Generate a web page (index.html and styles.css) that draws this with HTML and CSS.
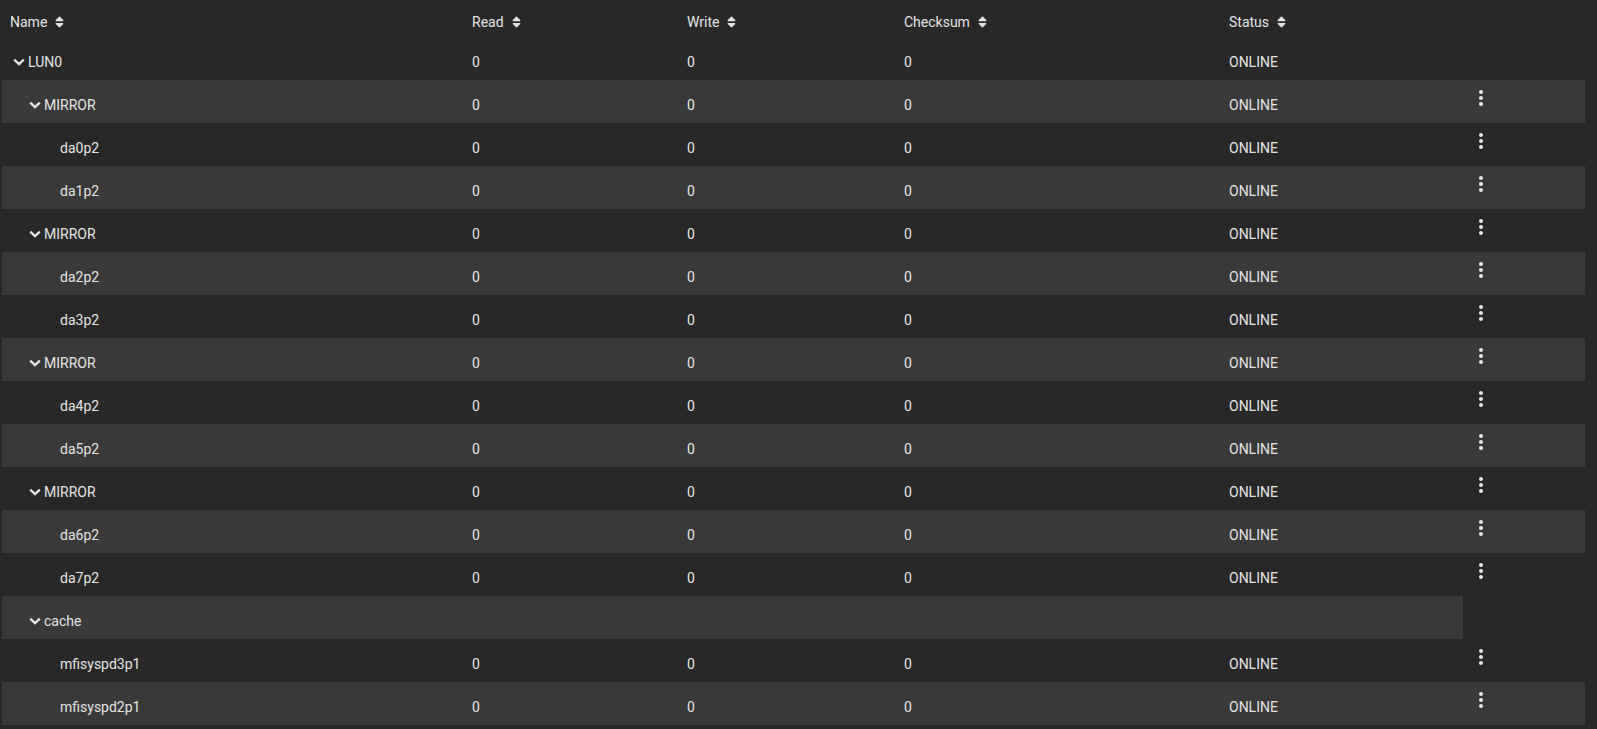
FILE: index.html
```html
<!DOCTYPE html>
<html lang="en">
<head>
<meta charset="utf-8">
<title>Pool topology</title>
<link rel="stylesheet" href="styles.css">
</head>
<body>
<svg width="0" height="0" class="defs">
  <defs>
    <symbol id="sort" viewBox="0 0 320 512"><path d="M41 288h238c21.4 0 32.1 25.9 17 41L177 448c-9.4 9.4-24.6 9.4-33.9 0L24 329c-15.1-15.1-4.4-41 17-41zm255-105L177 64c-9.4-9.4-24.6-9.4-33.9 0L24 183c-15.1 15.1-4.4 41 17 41h238c21.4 0 32.1-25.9 17-41z"/></symbol>
    <symbol id="chev" viewBox="0 0 20 20"><polyline points="5.2,7.6 10,12.2 14.8,7.6" fill="none" stroke="currentColor" stroke-width="2.3" stroke-linecap="butt" stroke-linejoin="miter"/></symbol>
    <symbol id="more" viewBox="0 0 24 24"><path d="M12 8c1.1 0 2-.9 2-2s-.9-2-2-2-2 .9-2 2 .9 2 2 2zm0 2c-1.1 0-2 .9-2 2s.9 2 2 2 2-.9 2-2-.9-2-2-2zm0 6c-1.1 0-2 .9-2 2s.9 2 2 2 2-.9 2-2-.9-2-2-2z"/></symbol>
  </defs>
</svg>
<div class="table">
  <div class="row head">
    <div class="cell"><span>Name</span><svg class="sort"><use href="#sort"/></svg></div>
    <div class="cell"><span>Read</span><svg class="sort"><use href="#sort"/></svg></div>
    <div class="cell"><span>Write</span><svg class="sort"><use href="#sort"/></svg></div>
    <div class="cell"><span>Checksum</span><svg class="sort"><use href="#sort"/></svg></div>
    <div class="cell"><span>Status</span><svg class="sort"><use href="#sort"/></svg></div>
    <div class="cell"></div>
  </div>

  <div class="row">
    <div class="cell name lvl0"><svg class="chev"><use href="#chev"/></svg><span>LUN0</span></div>
    <div class="cell">0</div><div class="cell">0</div><div class="cell">0</div><div class="cell">ONLINE</div><div class="cell"></div>
  </div>

  <div class="row odd">
    <div class="cell name lvl1"><svg class="chev"><use href="#chev"/></svg><span>MIRROR</span></div>
    <div class="cell">0</div><div class="cell">0</div><div class="cell">0</div><div class="cell">ONLINE</div>
    <div class="cell act"><svg class="more"><use href="#more"/></svg></div>
  </div>
  <div class="row">
    <div class="cell name lvl2"><span>da0p2</span></div>
    <div class="cell">0</div><div class="cell">0</div><div class="cell">0</div><div class="cell">ONLINE</div>
    <div class="cell act"><svg class="more"><use href="#more"/></svg></div>
  </div>
  <div class="row odd">
    <div class="cell name lvl2"><span>da1p2</span></div>
    <div class="cell">0</div><div class="cell">0</div><div class="cell">0</div><div class="cell">ONLINE</div>
    <div class="cell act"><svg class="more"><use href="#more"/></svg></div>
  </div>

  <div class="row">
    <div class="cell name lvl1"><svg class="chev"><use href="#chev"/></svg><span>MIRROR</span></div>
    <div class="cell">0</div><div class="cell">0</div><div class="cell">0</div><div class="cell">ONLINE</div>
    <div class="cell act"><svg class="more"><use href="#more"/></svg></div>
  </div>
  <div class="row odd">
    <div class="cell name lvl2"><span>da2p2</span></div>
    <div class="cell">0</div><div class="cell">0</div><div class="cell">0</div><div class="cell">ONLINE</div>
    <div class="cell act"><svg class="more"><use href="#more"/></svg></div>
  </div>
  <div class="row">
    <div class="cell name lvl2"><span>da3p2</span></div>
    <div class="cell">0</div><div class="cell">0</div><div class="cell">0</div><div class="cell">ONLINE</div>
    <div class="cell act"><svg class="more"><use href="#more"/></svg></div>
  </div>

  <div class="row odd">
    <div class="cell name lvl1"><svg class="chev"><use href="#chev"/></svg><span>MIRROR</span></div>
    <div class="cell">0</div><div class="cell">0</div><div class="cell">0</div><div class="cell">ONLINE</div>
    <div class="cell act"><svg class="more"><use href="#more"/></svg></div>
  </div>
  <div class="row">
    <div class="cell name lvl2"><span>da4p2</span></div>
    <div class="cell">0</div><div class="cell">0</div><div class="cell">0</div><div class="cell">ONLINE</div>
    <div class="cell act"><svg class="more"><use href="#more"/></svg></div>
  </div>
  <div class="row odd">
    <div class="cell name lvl2"><span>da5p2</span></div>
    <div class="cell">0</div><div class="cell">0</div><div class="cell">0</div><div class="cell">ONLINE</div>
    <div class="cell act"><svg class="more"><use href="#more"/></svg></div>
  </div>

  <div class="row">
    <div class="cell name lvl1"><svg class="chev"><use href="#chev"/></svg><span>MIRROR</span></div>
    <div class="cell">0</div><div class="cell">0</div><div class="cell">0</div><div class="cell">ONLINE</div>
    <div class="cell act"><svg class="more"><use href="#more"/></svg></div>
  </div>
  <div class="row odd">
    <div class="cell name lvl2"><span>da6p2</span></div>
    <div class="cell">0</div><div class="cell">0</div><div class="cell">0</div><div class="cell">ONLINE</div>
    <div class="cell act"><svg class="more"><use href="#more"/></svg></div>
  </div>
  <div class="row">
    <div class="cell name lvl2"><span>da7p2</span></div>
    <div class="cell">0</div><div class="cell">0</div><div class="cell">0</div><div class="cell">ONLINE</div>
    <div class="cell act"><svg class="more"><use href="#more"/></svg></div>
  </div>

  <div class="row odd group">
    <div class="cell name lvl1"><svg class="chev"><use href="#chev"/></svg><span>cache</span></div>
    <div class="cell"></div><div class="cell"></div><div class="cell"></div><div class="cell"></div>
  </div>
  <div class="row">
    <div class="cell name lvl2"><span>mfisyspd3p1</span></div>
    <div class="cell">0</div><div class="cell">0</div><div class="cell">0</div><div class="cell">ONLINE</div>
    <div class="cell act"><svg class="more"><use href="#more"/></svg></div>
  </div>
  <div class="row odd">
    <div class="cell name lvl2"><span>mfisyspd2p1</span></div>
    <div class="cell">0</div><div class="cell">0</div><div class="cell">0</div><div class="cell">ONLINE</div>
    <div class="cell act"><svg class="more"><use href="#more"/></svg></div>
  </div>
</div>
</body>
</html>
```

FILE: styles.css
```css
html, body {
  margin: 0;
  padding: 0;
  background: #282828;
  height: 100%;
  overflow: hidden;
}

body {
  font-family: Roboto, "Liberation Sans", Arial, sans-serif;
  font-size: 14px;
  line-height: 20px;
  color: #e4e4e4;
}

.defs {
  position: absolute;
  width: 0;
  height: 0;
}

.table {
  padding-left: 2px;
  width: 1583px;
}

.row {
  display: grid;
  grid-template-columns: 462px 215px 217px 325px 242px 122px;
  height: 43px;
  align-items: start;
}

.row.odd {
  background: #393939;
}

.row.group {
  grid-template-columns: 462px 215px 217px 325px 242px;
  width: 1461px;
}

.row.head {
  height: 37px;
}

.cell {
  display: flex;
  align-items: center;
  padding: 15px 0 0 8px;
  height: 20px;
  white-space: nowrap;
}

.head .cell {
  padding-top: 12px;
}

.sort {
  width: 9px;
  height: 14px;
  margin-left: 8px;
  fill: #e4e4e4;
}

.name.lvl0 { padding-left: 8px; }
.name.lvl1 { padding-left: 24px; }
.name.lvl2 { padding-left: 58px; }

.chev {
  width: 20px;
  height: 20px;
  margin-left: -1px;
  margin-right: -1px;
  color: #e4e4e4;
}

.cell.act {
  padding: 6px 0 0 6px;
  height: 24px;
}

.more {
  width: 24px;
  height: 24px;
  fill: #e8e8e8;
}
```
